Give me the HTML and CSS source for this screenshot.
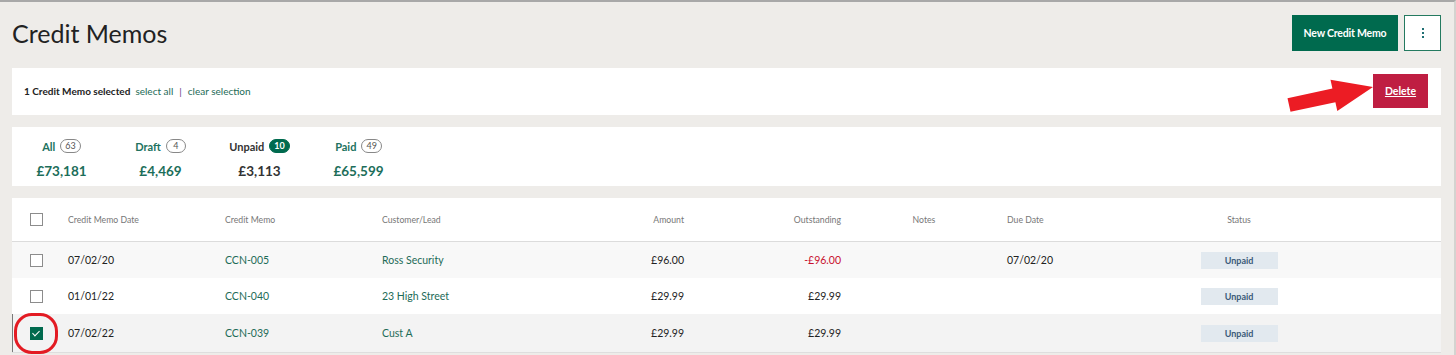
FILE: index.html
```html
<!DOCTYPE html>
<html lang="en">
<head>
  <meta charset="UTF-8" />
  <meta name="viewport" content="width=device-width, initial-scale=1.0"/>
  <title>Credit Memos</title>
  <link rel="stylesheet" href="styles.css">
</head>
<body>
  <header class="page-head">
    <h1>Credit Memos</h1>
    <div class="head-actions">
      <button class="btn-primary">New Credit Memo</button>
      <button class="btn-more" aria-label="More">
        <span class="dot"></span><span class="dot"></span><span class="dot"></span>
      </button>
    </div>
  </header>

  <div class="card selection-bar">
    <div class="selection-text">
      <strong>1 Credit Memo selected</strong>
      <a href="#">select all</a>
      <span class="sep">|</span>
      <a href="#">clear selection</a>
    </div>
    <button class="btn-delete">Delete</button>
  </div>

  <div class="card summary">
    <div class="summary-item">
      <div class="summary-label">All <span class="count">63</span></div>
      <div class="summary-value">£73,181</div>
    </div>
    <div class="summary-item">
      <div class="summary-label">Draft <span class="count">4</span></div>
      <div class="summary-value">£4,469</div>
    </div>
    <div class="summary-item active">
      <div class="summary-label">Unpaid <span class="count">10</span></div>
      <div class="summary-value">£3,113</div>
    </div>
    <div class="summary-item">
      <div class="summary-label">Paid <span class="count">49</span></div>
      <div class="summary-value">£65,599</div>
    </div>
  </div>

  <div class="card table-card">
    <table class="memos">
      <colgroup>
        <col style="width:44px"><col style="width:157px"><col style="width:157px">
        <col style="width:170px"><col style="width:156px"><col style="width:157px">
        <col style="width:142px"><col style="width:165px"><col style="width:158px">
        <col>
      </colgroup>
      <thead>
        <tr>
          <th class="cell-check"><span class="checkbox"></span></th>
          <th>Credit Memo Date</th>
          <th>Credit Memo</th>
          <th>Customer/Lead</th>
          <th class="num">Amount</th>
          <th class="num">Outstanding</th>
          <th class="center">Notes</th>
          <th>Due Date</th>
          <th class="center">Status</th>
          <th></th>
        </tr>
      </thead>
      <tbody>
        <tr class="shaded">
          <td class="cell-check"><span class="checkbox"></span></td>
          <td>07/02/20</td>
          <td><a href="#">CCN-005</a></td>
          <td><a href="#">Ross Security</a></td>
          <td class="num">£96.00</td>
          <td class="num negative">-£96.00</td>
          <td></td>
          <td>07/02/20</td>
          <td class="center"><span class="pill">Unpaid</span></td>
          <td></td>
        </tr>
        <tr>
          <td class="cell-check"><span class="checkbox"></span></td>
          <td>01/01/22</td>
          <td><a href="#">CCN-040</a></td>
          <td><a href="#">23 High Street</a></td>
          <td class="num">£29.99</td>
          <td class="num">£29.99</td>
          <td></td>
          <td></td>
          <td class="center"><span class="pill">Unpaid</span></td>
          <td></td>
        </tr>
        <tr class="selected">
          <td class="cell-check"><span class="checkbox checked"></span></td>
          <td>07/02/22</td>
          <td><a href="#">CCN-039</a></td>
          <td><a href="#">Cust A</a></td>
          <td class="num">£29.99</td>
          <td class="num">£29.99</td>
          <td></td>
          <td></td>
          <td class="center"><span class="pill">Unpaid</span></td>
          <td></td>
        </tr>
      </tbody>
    </table>
  </div>

  <!-- annotations drawn over the screenshot -->
  <svg class="note-arrow" width="100" height="40" viewBox="1280 76 100 40">
    <polygon fill="#ec1c24" points="1287.5,98.2 1332.4,88.6 1330.5,79.8 1373,87 1337.3,111 1335.4,102.2 1290.5,111.8"/>
  </svg>
  <div class="note-circle"></div>
</body>
</html>
```

FILE: styles.css
```css
body {
  margin: 0;
  padding: 0 13px 0 12px;
  font-family: 'Lato', 'Liberation Sans', sans-serif;
  background-color: #eeece9;
  color: #222;
  border-top: 2px solid #a8a8a8;
  border-right: 2px solid #d4d3d0;
  height: 353px;
  position: relative;
  overflow: hidden;
}

a {
  color: #1d6b57;
  text-decoration: none;
}

.page-head {
  display: flex;
  justify-content: space-between;
  align-items: center;
  padding: 13px 0 17px 0;
}

.page-head h1 {
  margin: 0;
  font-size: 25px;
  font-weight: normal;
  color: #222;
}

.head-actions {
  display: flex;
  gap: 6px;
}

.btn-primary {
  height: 36px;
  width: 106px;
  border: none;
  background-color: #006a4e;
  color: #fff;
  font-family: inherit;
  font-size: 10.5px;
  font-weight: bold;
  letter-spacing: -0.2px;
  padding: 0;
}

.btn-more {
  height: 36px;
  width: 37px;
  background-color: #fff;
  border: 1px solid #247a60;
  display: flex;
  flex-direction: column;
  align-items: center;
  justify-content: center;
  gap: 2px;
  padding: 0;
}

.dot {
  width: 2px;
  height: 2px;
  background-color: #1f6f73;
}

.card {
  background-color: #fff;
  margin-bottom: 12px;
}

.selection-bar {
  display: flex;
  justify-content: space-between;
  align-items: center;
  padding: 6px 13px 7px 12px;
}

.selection-text {
  font-size: 10px;
  display: flex;
  gap: 5px;
  align-items: center;
}

.selection-text strong {
  color: #222;
}

.selection-text .sep {
  color: #5a3d78;
  margin: 0 1px;
}

.btn-delete {
  height: 34px;
  width: 55px;
  border: none;
  background-color: #bf1e42;
  color: #fff;
  font-family: inherit;
  font-size: 10.5px;
  font-weight: bold;
  text-decoration: underline;
  padding: 0;
}

.summary {
  display: flex;
  height: 55px;
  padding-top: 4px;
  align-items: center;
}

.summary-item {
  width: 99px;
  text-align: center;
}

.summary-label {
  font-size: 11px;
  font-weight: bold;
  color: #217260;
  display: flex;
  justify-content: center;
  align-items: center;
  gap: 5px;
  height: 16px;
}

.count {
  display: inline-block;
  min-width: 10px;
  height: 12px;
  line-height: 12px;
  padding: 0 4px;
  border: 1px solid #888;
  border-radius: 8px;
  font-size: 9px;
  font-weight: normal;
  color: #555;
}

.summary-value {
  margin-top: 9px;
  font-size: 13.5px;
  font-weight: bold;
  color: #1c6e5a;
}

.summary-item.active .summary-label {
  color: #333;
}

.summary-item.active .summary-value {
  color: #333;
}

.summary-item.active .count {
  background-color: #006a4e;
  border-color: #006a4e;
  color: #fff;
  font-weight: bold;
}

.table-card {
  margin-bottom: 0;
}

.memos {
  width: 100%;
  border-collapse: collapse;
  table-layout: fixed;
}

.memos th {
  height: 43px;
  padding: 0 12px;
  text-align: left;
  font-size: 8.7px;
  font-weight: normal;
  color: #777;
  border-bottom: 1px solid #dcdcdc;
}

.memos td {
  height: 36px;
  padding: 0 12px;
  font-size: 10.5px;
  color: #222;
}

.memos tbody tr.shaded {
  background-color: #f8f8f8;
}

.memos tbody tr.selected {
  background-color: #f3f3f3;
}

.memos tbody tr.selected td {
  height: 38px;
  border-bottom: 1px solid #dedede;
}

.memos tbody tr.selected td.cell-check {
  box-shadow: inset 1px 0 #7a7a7a;
}

.memos .num {
  text-align: right;
}

.memos .center {
  text-align: center;
}

.memos td.negative {
  color: #c8102e;
}

.memos .cell-check {
  padding: 0 0 0 18px;
}

.checkbox {
  display: block;
  width: 11px;
  height: 11px;
  border: 1px solid #8c8c8c;
  background-color: #fff;
  position: relative;
}

.checkbox.checked {
  background-color: #006a4e;
  border-color: #006a4e;
}

.checkbox.checked::after {
  content: "";
  position: absolute;
  left: 3px;
  top: 1px;
  width: 3px;
  height: 6px;
  border: solid #fff;
  border-width: 0 1.5px 1.5px 0;
  transform: rotate(45deg);
}

.pill {
  display: inline-block;
  width: 77px;
  height: 17px;
  line-height: 17px;
  background-color: #e2e9ef;
  color: #3b5b79;
  font-size: 9px;
  font-weight: bold;
}

.note-arrow {
  position: absolute;
  left: 1280px;
  top: 74px;
}

.note-circle {
  position: absolute;
  left: 14px;
  top: 311px;
  width: 38px;
  height: 35px;
  border: 3px solid #e31b23;
  border-radius: 18px;
}
```
